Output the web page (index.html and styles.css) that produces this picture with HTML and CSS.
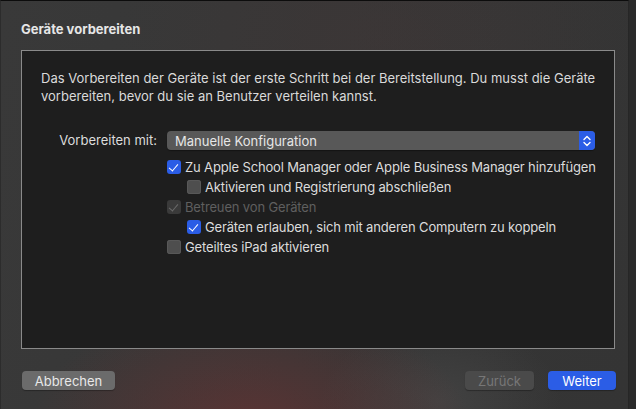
FILE: index.html
```html
<!DOCTYPE html>
<html lang="de">

<head>
	<meta charset="UTF-8">
	<title>Geräte vorbereiten</title>
	<link rel="stylesheet" href="styles.css">
</head>

<body>
	<div class="window">
		<h1 class="title">Geräte vorbereiten</h1>
		<section class="panel">
			<p class="intro">Das Vorbereiten der Geräte ist der erste Schritt bei der Bereitstellung. Du musst die Geräte vorbereiten, bevor du sie an Benutzer verteilen kannst.</p>
			<div class="form">
				<label class="form-label">Vorbereiten mit:</label>
				<div class="popup">
					<span class="popup-text">Manuelle Konfiguration</span>
					<span class="stepper">
						<svg width="8" height="12" viewBox="0 0 8 12">
							<path d="M1 4.5 L4 1.5 L7 4.5 M1 7.5 L4 10.5 L7 7.5" fill="none" stroke="#fff" stroke-width="1.4" stroke-linecap="round" stroke-linejoin="round" />
						</svg>
					</span>
				</div>
				<div></div>
				<ul class="options">
					<li class="option"><span class="box checked"></span>Zu Apple School Manager oder Apple Business Manager hinzufügen</li>
					<li class="option sub"><span class="box"></span>Aktivieren und Registrierung abschließen</li>
					<li class="option disabled"><span class="box checked"></span>Betreuen von Geräten</li>
					<li class="option sub"><span class="box checked"></span>Geräten erlauben, sich mit anderen Computern zu koppeln</li>
					<li class="option"><span class="box"></span>Geteiltes iPad aktivieren</li>
				</ul>
			</div>
		</section>
		<footer class="actions">
			<button class="btn">Abbrechen</button>
			<span class="spacer"></span>
			<button class="btn off">Zurück</button>
			<button class="btn primary">Weiter</button>
		</footer>
	</div>
</body>

</html>
```

FILE: styles.css
```css
* {
	padding: 0;
	margin: 0;
	box-sizing: border-box;
}

body {
	width: 636px;
	height: 409px;
	overflow: hidden;
	background-color: #2a2a2a;
	font-family: Inter, "Noto Sans", "Liberation Sans", sans-serif;
	font-size: 13px;
	color: #dcdcdc;
}

.window {
	height: 409px;
	width: 629px;
	border-top: 1px solid #0c0c0c;
	border-left: 1px solid #2c2c2c;
	border-right: 1px solid #262626;
	background:
		radial-gradient(ellipse 220px 120px at 250px 425px, rgba(120, 50, 50, 0.55), rgba(120, 50, 50, 0) 100%),
		radial-gradient(ellipse 120px 80px at 440px 400px, rgba(90, 90, 90, 0.35), rgba(90, 90, 90, 0) 100%),
		radial-gradient(ellipse 260px 160px at 380px 40px, rgba(70, 55, 55, 0.35), rgba(70, 55, 55, 0) 100%),
		linear-gradient(100deg, #393939 0%, #363636 50%, #343434 100%);
	padding: 20px 0 0 20px;
	display: flex;
	flex-flow: column nowrap;
}

.title {
	font-size: 13px;
	font-weight: 700;
	line-height: 16px;
	color: #e6e6e6;
	height: 29px;
}

.panel {
	width: 594px;
	height: 299px;
	background-color: #1e1e1e;
	border: 1px solid #8a8a8a;
	padding: 18px 19px 0 19px;
}

.intro {
	line-height: 18px;
	color: #dadada;
	width: 560px;
}

.form {
	margin-top: 26px;
	display: grid;
	grid-template-columns: 135px 428px;
	column-gap: 10px;
	row-gap: 7px;
	margin-left: -19px;
}

.form-label {
	text-align: right;
	line-height: 19px;
	color: #dcdcdc;
}

.popup {
	height: 19px;
	background-color: #585858;
	border-radius: 4px;
	display: flex;
	align-items: center;
	justify-content: space-between;
	padding-left: 8px;
	color: #e6e6e6;
	box-shadow: 0 1px 1px rgba(0, 0, 0, 0.35);
}

.stepper {
	width: 16px;
	height: 19px;
	background-color: #2b5de6;
	border-radius: 0 4px 4px 0;
	display: flex;
	align-items: center;
	justify-content: center;
}

.options {
	list-style: none;
	display: flex;
	flex-flow: column nowrap;
}

.option {
	height: 20px;
	display: flex;
	align-items: center;
	gap: 4px;
	color: #dcdcdc;
	white-space: nowrap;
	letter-spacing: -0.15px;
}

.option.sub {
	padding-left: 20px;
}

.option.disabled {
	color: #5f5f5f;
}

.box {
	width: 14px;
	height: 14px;
	flex: 0 0 14px;
	border-radius: 3px;
	background-color: #4e4e4e;
	box-shadow: inset 0 0 0 1px #585858;
	position: relative;
}

.box.checked {
	background-color: #2b5de6;
	box-shadow: none;
}

.box.checked::after {
	content: "";
	position: absolute;
	left: 4px;
	top: 1.5px;
	width: 4px;
	height: 8px;
	border-right: 1.6px solid #fff;
	border-bottom: 1.6px solid #fff;
	transform: rotate(40deg);
}

.disabled .box.checked {
	background-color: #3a3a3a;
}

.disabled .box.checked::after {
	border-color: #6a6a6a;
}

.actions {
	margin-top: 22px;
	width: 595px;
	display: flex;
	gap: 14px;
	padding-left: 1px;
}

.spacer {
	flex: 1 1 auto;
}

.btn {
	font: inherit;
	height: 19px;
	border: none;
	border-radius: 4px;
	background-color: #6b6b6b;
	color: #e8e8e8;
	padding: 0;
	width: 93px;
	box-shadow: 0 1px 1px rgba(0, 0, 0, 0.3);
}

.btn.off {
	width: 69px;
	background-color: #4a4a4a;
	color: #777;
}

.btn.primary {
	width: 68px;
	background-color: #2b5de6;
	color: #fff;
}
```
